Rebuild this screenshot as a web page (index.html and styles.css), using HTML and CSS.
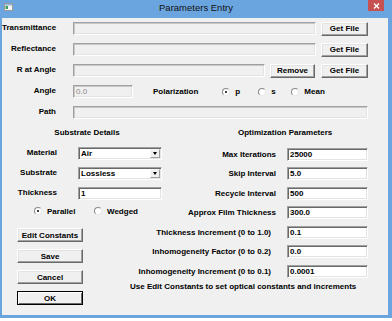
FILE: index.html
```html
<!DOCTYPE html>
<html>
<head>
<meta charset="utf-8">
<title>Parameters Entry</title>
<link rel="stylesheet" href="styles.css">
</head>
<body>
<div class="win">
  <div class="titlebar">
    <svg class="ticon" width="9" height="8" viewBox="0 0 9 8">
      <rect x="0.5" y="0.5" width="8" height="7" fill="#f4f4f4" stroke="#9a9a9a"/>
      <rect x="1" y="1" width="7" height="1.5" fill="#8fb8e0"/>
      <rect x="1.5" y="3" width="2.5" height="3" fill="#3c9a5a"/>
    </svg>
    <div class="title">Parameters Entry</div>
    <div class="close">
      <svg width="7" height="6" viewBox="0 0 7 6"><path d="M1 0.5 L6 5.5 M6 0.5 L1 5.5" stroke="#fff" stroke-width="1.4"/></svg>
    </div>
  </div>
  <div class="client">
    <div class="top">
      <div class="row">
        <span class="lbl">Transmittance</span>
        <span class="field ro grow"></span>
        <span class="btn getfile">Get File</span>
      </div>
      <div class="row">
        <span class="lbl">Reflectance</span>
        <span class="field ro grow"></span>
        <span class="btn getfile">Get File</span>
      </div>
      <div class="row">
        <span class="lbl">R at Angle</span>
        <span class="field ro grow"></span>
        <span class="btn remove">Remove</span>
        <span class="btn getfile">Get File</span>
      </div>
      <div class="row">
        <span class="lbl">Angle</span>
        <span class="field ro angle">0.0</span>
        <span class="pol">Polarization</span>
        <span class="ropt ropt-p"><span class="radio on"></span>p</span>
        <span class="ropt ropt-s"><span class="radio"></span>s</span>
        <span class="ropt"><span class="radio"></span>Mean</span>
      </div>
      <div class="row">
        <span class="lbl">Path</span>
        <span class="field ro grow"></span>
      </div>
    </div>

    <div class="lower">
      <div class="sub">
        <div class="sec-h sub-h">Substrate Details</div>
        <div class="srow">
          <span class="slbl">Material</span>
          <span class="select"><span class="sval">Air</span><span class="arrow"></span></span>
        </div>
        <div class="srow">
          <span class="slbl">Substrate</span>
          <span class="select"><span class="sval">Lossless</span><span class="arrow"></span></span>
        </div>
        <div class="srow">
          <span class="slbl">Thickness</span>
          <span class="field sfield">1</span>
        </div>
        <div class="rrow">
          <span class="ropt ropt-par"><span class="radio on"></span>Parallel</span>
          <span class="ropt"><span class="radio"></span>Wedged</span>
        </div>
      </div>

      <div class="opt">
        <div class="sec-h opt-h">Optimization Parameters</div>
        <div class="orow first"><span>Max Iterations</span><span class="field ofield">25000</span></div>
        <div class="orow"><span>Skip Interval</span><span class="field ofield">5.0</span></div>
        <div class="orow"><span>Recycle Interval</span><span class="field ofield">500</span></div>
        <div class="orow"><span>Approx Film Thickness</span><span class="field ofield">300.0</span></div>
      </div>

      <div class="btns">
        <span class="btn big">Edit Constants</span>
        <span class="btn big">Save</span>
        <span class="btn big">Cancel</span>
        <span class="btn big default">OK</span>
      </div>

      <div class="note">
        <div class="nrow first"><span>Thickness Increment (0 to 1.0)</span><span class="field ofield">0.1</span></div>
        <div class="nrow"><span>Inhomogeneity Factor (0 to 0.2)</span><span class="field ofield">0.0</span></div>
        <div class="nrow"><span>Inhomogeneity Increment (0 to 0.1)</span><span class="field ofield">0.0001</span></div>
        <div class="hint">Use Edit Constants to set optical constants and increments</div>
      </div>
    </div>
  </div>
</div>
</body>
</html>
```

FILE: styles.css
```css
* { box-sizing: border-box; }
html, body { margin: 0; padding: 0; background: #fff; }
body {
  font-family: "Liberation Sans", Arial, sans-serif;
  font-size: 8px;
  font-weight: bold;
  color: #000;
}
.win {
  width: 392px;
  height: 318px;
  background: #6ba5e0;
  display: flex;
  flex-direction: column;
}
.titlebar {
  height: 18px;
  flex: none;
  display: grid;
  grid-template-columns: 1fr auto 1fr;
  align-items: start;
}
.ticon { display: block; margin: 3px 0 0 4px; }
.title {
  font-weight: normal;
  font-size: 9.5px;
  line-height: 16px;
  color: #111;
}
.close {
  justify-self: end;
  margin-right: 8px;
  width: 16px;
  height: 11px;
  background: #c75050;
  display: flex;
  align-items: center;
  justify-content: center;
}
.close svg { display: block; }
.client {
  flex: 1;
  margin: 0 4px 3px 2px;
  background: #f0f0f0;
  padding: 3px 20px 0 0;
}

/* top rows */
.top { display: flex; flex-direction: column; gap: 6px; }
.row { display: flex; align-items: center; height: 15px; }
.lbl {
  width: 54px;
  flex: none;
  text-align: right;
  margin-right: 17px;
  white-space: nowrap;
  padding-bottom: 3px;
}
.field {
  display: flex;
  align-items: center;
  height: 13px;
  background: #fff;
  border: 1px solid;
  border-color: #a0a0a0 #fff #fff #a0a0a0;
  box-shadow: inset 1px 1px 0 #696969, inset -1px -1px 0 #e3e3e3;
  padding: 0 2px;
  white-space: nowrap;
}
.field.ro {
  background: #f0f0f0;
  box-shadow: inset 1px 1px 0 #c8c8c8, inset -1px -1px 0 #e3e3e3;
}
.grow { flex: 1; }
.angle { width: 60px; color: #8a8a8a; font-weight: normal; }
.btn {
  display: flex;
  align-items: center;
  justify-content: center;
  height: 14px;
  background: #f0f0f0;
  border: 1px solid;
  border-color: #fff #696969 #696969 #fff;
  box-shadow: inset -1px -1px 0 #a0a0a0, inset 1px 1px 0 #e3e3e3;
  white-space: nowrap;
  flex: none;
}
.getfile { width: 47px; margin-left: 5px; }
.remove { width: 45px; margin-left: 5px; }
.remove + .getfile { margin-left: 6px; }
.pol { margin-left: 20px; margin-right: 24px; padding-bottom: 1px; }
.ropt { display: inline-flex; align-items: center; gap: 5px; }
.ropt-p { width: 36px; }
.ropt-s { width: 33px; }
.radio {
  width: 8px;
  height: 8px;
  border-radius: 50%;
  border: 1px solid;
  border-color: #8a8a8a #e8e8e8 #e8e8e8 #8a8a8a;
  background: #fff;
  display: flex;
  align-items: center;
  justify-content: center;
}
.radio.on::after {
  content: "";
  width: 2px;
  height: 2px;
  border-radius: 50%;
  background: #000;
}

/* lower grid */
.lower {
  display: grid;
  grid-template-columns: 128px 42px 1fr;
  grid-template-areas:
    "sub sub opt"
    "btns note note";
  margin-top: 6px;
}
.sub { grid-area: sub; }
.opt { grid-area: opt; }
.btns { grid-area: btns; }
.note { grid-area: note; }

.sec-h { height: 14px; line-height: 14px; white-space: nowrap; }
.sub-h { text-align: center; }
.opt-h { padding-left: 66px; }

.srow { display: flex; align-items: center; height: 14px; margin-top: 6px; }
.slbl { width: 55px; text-align: right; margin-right: 21px; flex: none; padding-bottom: 1px; }
.select {
  width: 84px;
  height: 13px;
  display: flex;
  background: #fff;
  border: 1px solid;
  border-color: #a0a0a0 #fff #fff #a0a0a0;
  box-shadow: inset 1px 1px 0 #696969, inset -1px -1px 0 #e3e3e3;
  padding: 1px;
}
.sval { flex: 1; padding-left: 1px; line-height: 10px; }
.arrow {
  width: 10px;
  background: #f0f0f0;
  border: 1px solid;
  border-color: #f8f8f8 #a0a0a0 #a0a0a0 #f8f8f8;
  display: flex;
  align-items: center;
  justify-content: center;
}
.arrow::after {
  content: "";
  border-style: solid;
  border-width: 3px 2.5px 0 2.5px;
  border-color: #000 transparent transparent transparent;
}
.sfield { width: 84px; }
.rrow { display: flex; align-items: center; height: 12px; margin-top: 5px; padding-left: 32px; }
.ropt-par { width: 60px; }

.orow, .nrow {
  display: flex;
  justify-content: flex-end;
  align-items: center;
  height: 14px;
  margin-top: 5.5px;
  white-space: nowrap;
}
.orow.first { margin-top: 7px; }
.ofield { width: 81px; margin-left: 11px; }
.nrow .ofield { margin-left: 16px; }
.nrow.first { margin-top: 5.5px; }
.hint { margin-top: 4px; line-height: 10px; white-space: nowrap; }

.btns {
  display: flex;
  flex-direction: column;
  gap: 7px;
  padding: 8.5px 0 0 15px;
}
.big { width: 66px; }
.default {
  border: 1px solid #000;
  box-shadow: inset 1px 1px 0 #fff, inset -1px -1px 0 #696969;
}
```
